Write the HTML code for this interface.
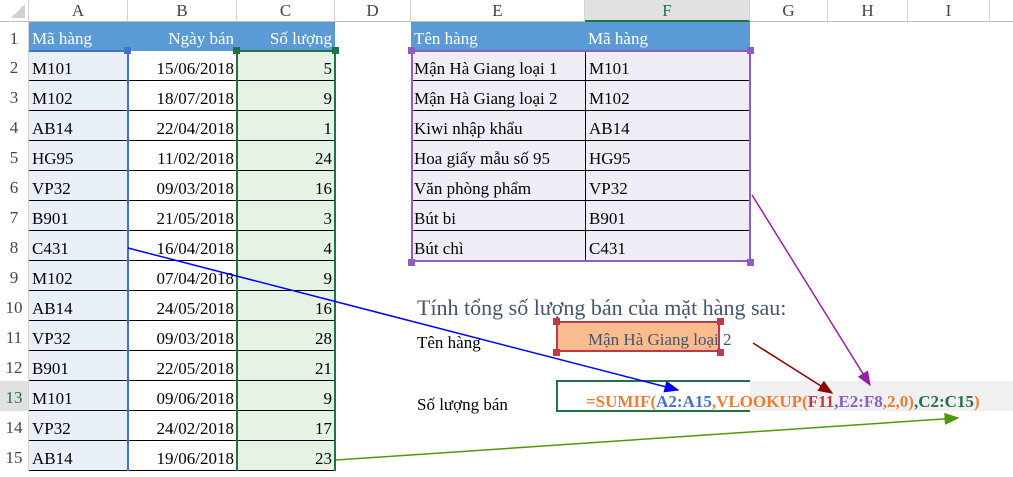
<!DOCTYPE html>
<html><head><meta charset="utf-8"><style>
body{margin:0;width:1013px;height:477px;overflow:hidden;background:#fff;font-family:"Liberation Serif",serif;position:relative}
div{position:absolute;box-sizing:border-box}
.h{top:0;height:22px;border-right:1px solid #d4d4d4;border-bottom:1px solid #bdbdbd;text-align:center;font-size:17px;line-height:22px;color:#444;background:#fff}
.r{left:0;width:29px;height:30px;text-align:center;font-size:17px;line-height:34px;color:#444;border-right:1px solid #d4d4d4}
.c{height:30px;font-size:17px;line-height:36px;white-space:nowrap;padding:0 3px;color:#000}
.rt{text-align:right}
</style></head><body>
<div class="h" style="left:0;width:29px;background:#fff"><svg width="29" height="22" style="position:absolute;left:0;top:0"><polygon points="25,4 25,18 11,18" fill="#d0d0d0"/></svg></div>
<div class="h" style="left:29px;width:99px">A</div>
<div class="h" style="left:128px;width:109px">B</div>
<div class="h" style="left:237px;width:98px">C</div>
<div class="h" style="left:335px;width:76px">D</div>
<div class="h" style="left:411px;width:174px">E</div>
<div class="h" style="left:585px;width:165px;background:#e1e1e1;color:#217346;border-bottom:2px solid #217346">F</div>
<div class="h" style="left:750px;width:78px">G</div>
<div class="h" style="left:828px;width:80px">H</div>
<div class="h" style="left:908px;width:82px">I</div>
<div class="h" style="left:990px;width:30px"></div>

<!-- row 1 header fills -->
<div style="left:29px;top:22px;width:306px;height:29px;background:#5b9bd5"></div>
<div style="left:411px;top:22px;width:339px;height:29px;background:#5b9bd5"></div>
<!-- selection fills -->
<div style="left:29px;top:51px;width:99px;height:420px;background:#e9f0f8"></div>
<div style="left:237px;top:51px;width:98px;height:420px;background:#e6f2e6"></div>
<div style="left:411px;top:51px;width:339px;height:210px;background:#f1edf7"></div>
<!-- row 13 gray -->
<div style="left:750px;top:381px;width:263px;height:30px;background:#f0f0f0"></div>

<div id="rows"></div>
<script>
var A=[["M101","15/06/2018",5],["M102","18/07/2018",9],["AB14","22/04/2018",1],["HG95","11/02/2018",24],["VP32","09/03/2018",16],["B901","21/05/2018",3],["C431","16/04/2018",4],["M102","07/04/2018",9],["AB14","24/05/2018",16],["VP32","09/03/2018",28],["B901","22/05/2018",21],["M101","09/06/2018",9],["VP32","24/02/2018",17],["AB14","19/06/2018",23]];
var E=[["Mận Hà Giang loại 1","M101"],["Mận Hà Giang loại 2","M102"],["Kiwi nhập khẩu","AB14"],["Hoa giấy mẫu số 95","HG95"],["Văn phòng phẩm","VP32"],["Bút bi","B901"],["Bút chì","C431"]];
var h="";
for(var i=1;i<=15;i++){var t=22+(i-1)*30-(i>1?1:0);
h+='<div class="r" style="top:'+t+'px;'+(i==13?'color:#217346;background:#e1e1e1':'')+'">'+i+'</div>';}
for(var i=0;i<14;i++){var t=51+i*30;
h+='<div class="c" style="left:29px;top:'+t+'px;width:99px;border-bottom:1px solid #000">'+A[i][0]+'</div>';
h+='<div class="c rt" style="left:128px;top:'+t+'px;width:109px;border-bottom:1px solid #000">'+A[i][1]+'</div>';
h+='<div class="c rt" style="left:237px;top:'+t+'px;width:98px;border-bottom:1px solid #000">'+A[i][2]+'</div>';}
for(var i=0;i<7;i++){var t=51+i*30;
h+='<div class="c" style="left:411px;top:'+t+'px;width:174px;'+(i<6?'border-bottom:1px solid #000':'')+'">'+E[i][0]+'</div>';
h+='<div class="c" style="left:585px;top:'+t+'px;width:165px;border-left:1px solid #000;'+(i<6?'border-bottom:1px solid #000':'')+'">'+E[i][1]+'</div>';}
document.getElementById("rows").innerHTML=h;
</script>
<div class="c" style="left:29px;top:22px;color:#fff;line-height:34px">Mã hàng</div>
<div class="c rt" style="left:128px;top:22px;width:109px;color:#fff;line-height:34px">Ngày bán</div>
<div class="c rt" style="left:237px;top:22px;width:98px;color:#fff;line-height:34px">Số lượng</div>
<div class="c" style="left:411px;top:22px;color:#fff;line-height:34px">Tên hàng</div>
<div class="c" style="left:585px;top:22px;color:#fff;line-height:34px">Mã hàng</div>

<!-- selection borders -->
<div style="left:29px;top:50px;width:100px;height:421px;border:2px solid #4472c4;border-left:none;border-bottom:none"></div>
<div style="left:29px;top:50px;width:100px;height:2px;background:#4472c4"></div>
<div style="left:236px;top:50px;width:100px;height:421px;border:2px solid #217346;border-bottom:none"></div>
<div style="left:411px;top:50px;width:340px;height:212px;border:2px solid #8e5fbf"></div>
<div style="left:124px;top:47px;width:7px;height:7px;background:#4472c4"></div>
<div style="left:233px;top:47px;width:7px;height:7px;background:#217346"></div>
<div style="left:332px;top:47px;width:7px;height:7px;background:#217346"></div>
<div style="left:408px;top:47px;width:7px;height:7px;background:#8e5fbf"></div>
<div style="left:747px;top:47px;width:7px;height:7px;background:#8e5fbf"></div>
<div style="left:408px;top:259px;width:7px;height:7px;background:#8e5fbf"></div>
<div style="left:747px;top:259px;width:7px;height:7px;background:#8e5fbf"></div>

<div class="c" style="left:414px;top:290px;font-size:22px;color:#44546a;line-height:36px">Tính tổng số lượng bán của mặt hàng sau:</div>
<div class="c" style="left:414px;top:325px">Tên hàng</div>
<div style="left:556px;top:321px;width:164px;height:31px;background:#f8bc8f;border:2px solid #c0394a;left:556px"></div>
<div style="left:556px;top:321px;width:164px;height:31px"></div>
<div class="c" style="left:585px;top:322px;color:#44546a;line-height:36px">Mận Hà Giang loại 2</div>
<div class="c" style="left:414px;top:387px">Số lượng bán</div>
<div style="left:556px;top:380px;width:194px;height:32px;border:2px solid #217346;border-right:none"></div>
<div class="c" style="left:583px;top:384px;font-weight:bold;line-height:36px;font-size:17px"><span style="color:#ed7d31">=SUMIF(</span><span style="color:#4472c4">A2:A15</span><span style="color:#ed7d31">,VLOOKUP(</span><span style="color:#c0394a">F11</span><span style="color:#8e5fbf">,E2:F8</span><span style="color:#ed7d31">,2,0)</span><span style="color:#217346">,C2:C15</span><span style="color:#ed7d31">)</span></div>

<svg width="1013" height="477" style="position:absolute;left:0;top:0">
<defs>
<marker id="mb" markerWidth="10" markerHeight="8" refX="9" refY="4" orient="auto"><polygon points="0,0 10,4 0,8" fill="#0000ff"/></marker>
<marker id="mp" markerWidth="10" markerHeight="8" refX="9" refY="4" orient="auto"><polygon points="0,0 10,4 0,8" fill="#9b1fa8"/></marker>
<marker id="mr" markerWidth="10" markerHeight="8" refX="9" refY="4" orient="auto"><polygon points="0,0 10,4 0,8" fill="#8b0000"/></marker>
<marker id="mg" markerWidth="10" markerHeight="8" refX="9" refY="4" orient="auto"><polygon points="0,0 10,4 0,8" fill="#4e9a06"/></marker>
</defs>
<line x1="128" y1="248" x2="678" y2="390" stroke="#0000ff" stroke-width="1.5" marker-end="url(#mb)"/>
<line x1="752" y1="195" x2="870" y2="385" stroke="#9b1fa8" stroke-width="1.5" marker-end="url(#mp)"/>
<line x1="753" y1="343" x2="832" y2="393" stroke="#8b0000" stroke-width="1.5" marker-end="url(#mr)"/>
<line x1="336" y1="460" x2="958" y2="418" stroke="#4e9a06" stroke-width="1.5" marker-end="url(#mg)"/>
</svg>
<div style="left:553px;top:318px;width:7px;height:7px;background:#c0394a"></div>
<div style="left:717px;top:318px;width:7px;height:7px;background:#c0394a"></div>
<div style="left:553px;top:349px;width:7px;height:7px;background:#c0394a"></div>
<div style="left:717px;top:349px;width:7px;height:7px;background:#c0394a"></div>
</body></html>
